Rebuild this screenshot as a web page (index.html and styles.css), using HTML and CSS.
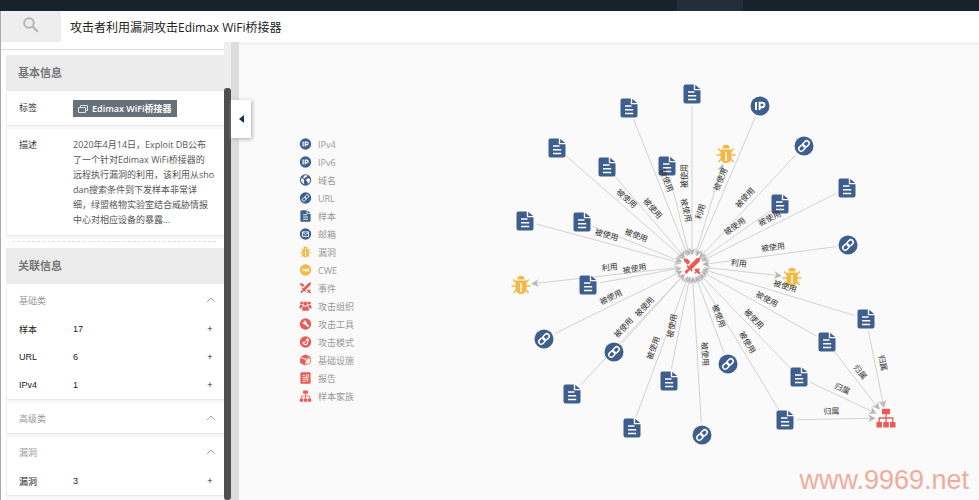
FILE: index.html
```html
<!DOCTYPE html>
<html lang="zh-CN">
<head>
    <meta charset="UTF-8">
    <meta name="viewport" content="width=device-width, initial-scale=1.0">
    <title>攻击者利用漏洞攻击Edimax WiFi桥接器</title>
    <link rel="stylesheet" href="styles.css">
</head>
<body>

<svg class="sprite" aria-hidden="true">
    <symbol id="ip" viewBox="0 0 20 20">
        <circle cx="10" cy="10" r="9.5"/>
        <path class="cut-line bold" d="M6 6v8M9.6 14V6.8h2.6a2.2 2.2 0 0 1 0 4.4H9.6"/>
    </symbol>
    <symbol id="domain" viewBox="0 0 20 20">
        <circle cx="10" cy="10" r="9.5"/>
        <path class="cut" d="M3 7l3 1 2 3-1 2 1 4-3-2-3-4zM9 2l4 0-1 3-3 1-1 2-2-1 1-3zM12 8l4-1 2 3-2 5-2 1-1-4-2-1z"/>
    </symbol>
    <symbol id="url" viewBox="0 0 20 20">
        <circle cx="10" cy="10" r="9.5"/>
        <g transform="rotate(-45 10 10)">
            <rect class="cut-line" x="3.6" y="7.6" width="7" height="4.8" rx="2.4"/>
            <rect class="cut-line" x="9.4" y="7.6" width="7" height="4.8" rx="2.4"/>
        </g>
    </symbol>
    <symbol id="sample" viewBox="0 0 20 20">
        <path d="M3.500.5h8.300v5.700h6.700v11.300a2 2 0 0 1-2 2h-13a2 2 0 0 1-2-2v-15a2 2 0 0 1 2-2zM13.200.8l5 4.300h-5z"/>
        <path class="cut-line" d="M6 8h6.500M6 11.700h8.200M6 15.400h8.200"/>
    </symbol>
    <symbol id="mail" viewBox="0 0 20 20">
        <circle cx="10" cy="10" r="9.500"/>
        <path class="cut-line" d="M5 6.500h10v7.500H5zM5 7l5 4 5-4"/>
    </symbol>
    <symbol id="bug" viewBox="0 0 20 20">
        <path d="M6.300 4.500a3.700 3.700 0 0 1 7.400 0zM4.500 5.500h11v8a5.500 5.500 0 0 1-11 0z"/>
        <path class="leg" d="M5 7.500L2.200 4.500M15 7.500l2.800-3M5 11H.5M15 11h4.500M5.500 14.500l-3 3.500M14.500 14.500l3 3.500"/>
        <path class="cut-line" d="M10 8v9"/>
    </symbol>
    <symbol id="cwe" viewBox="0 0 20 20">
        <circle cx="10" cy="10" r="9.500"/>
        <path class="cut-line" d="M7 8a2 2 0 1 0 0 4M8.500 8l1 4 1-3 1 3 1-4M16 8h-2v4h2M14 10h2"/>
    </symbol>
    <symbol id="event" viewBox="0 0 20 20">
        <path d="M19.500.5l-1 4.500-8.800 8.800 1.300 1.400-1.400 1.300-2-2-3.800 4.300-2.300-2.300L5.700 12.500l-2-2 1.400-1.400 1.300 1.300L15 1.500zM.5 1.500l4.500.8 3.200 3.200-3 3L1.500 5zM12.500 14.200l2-2 1.500 1.500 1.500-1.500 1.300 1.400-1.500 1.500 2.200 2.400-1.800 1.800-2.400-2.200-1.500 1.500-1.300-1.400 1.500-1.500z"/>
    </symbol>
    <symbol id="group" viewBox="0 0 20 20">
        <circle cx="10" cy="6" r="3.500"/><circle cx="3.800" cy="5" r="2.700"/><circle cx="16.200" cy="5" r="2.700"/>
        <path d="M4.500 18v-3.500c0-3 2-4.500 3.500-4.500l2 2 2-2c1.500 0 3.500 1.500 3.500 4.500V18zM0 14v-2.500C0 9.500 1.500 8 3 8l3 1.500C4 11 3.500 12.500 3.500 14zM20 14v-2.500C20 9.500 18.500 8 17 8l-3 1.500c2 1.500 2.500 3 2.500 4.500z"/>
    </symbol>
    <symbol id="tool" viewBox="0 0 20 20">
        <circle cx="10" cy="10" r="9.500"/>
        <path class="cut" d="M5 6l2.300 1.800 1.500-1.500L7 4.500c3-1 5.500 1.500 4.500 4l4.500 5-1.800 1.800-5-4.500C7 11.500 4.500 9 5 6z"/>
    </symbol>
    <symbol id="mode" viewBox="0 0 20 20">
        <circle cx="10" cy="10" r="9.500"/>
        <path class="cut-line bold" d="M6 9.500c-.5 5.500 7 6.500 7.500 1.500V5.500M11 7.500l2.500-2.500L15.500 7.500M8 11l2-2"/>
    </symbol>
    <symbol id="infra" viewBox="0 0 20 20">
        <path d="M10 1l8.500 3.500L10 8 1.500 4.500z"/>
        <path d="M1 6l8.300 3.500V19L1 15z"/>
        <path class="outline" d="M10.500 9.500L18.300 6.200v8.500l-7.800 3.600z"/>
    </symbol>
    <symbol id="report" viewBox="0 0 20 20">
        <rect x="1.500" y=".5" width="17" height="19" rx="2"/>
        <path class="cut-line" d="M5 5.500h4M5 9h10M5 12h10M5 15.500h5M12 3.500v5M15 4v4M13 13v3"/>
    </symbol>
    <symbol id="family" viewBox="0 0 20 20">
        <path d="M6 .8h8v5.500H6zM.5 14h5.500v5.500H.5zM7.300 14h5.500v5.500H7.300zM14 14h5.500v5.500H14z"/>
        <path class="leg" d="M10 6v8M3.200 14v-4h13.600v4"/>
    </symbol>
</svg>

<nav class="topbar"><span class="topbar-tab"></span></nav>

<header class="header">
    <button class="search" type="button" aria-label="搜索">
        <svg viewBox="0 0 16 16"><circle cx="6" cy="6" r="4.800"/><path d="M9.500 9.500l5.300 5.300"/></svg>
    </button>
    <h1 class="title">攻击者利用漏洞攻击Edimax WiFi桥接器</h1>
</header>

<div class="content">
    <aside class="sidebar">
        <div class="panel">
            <h2 class="section-title">基本信息</h2>
            <div class="card info">
                <span class="label">标签</span>
                <span class="tag">
                    <svg viewBox="0 0 10 8"><path d="M2.500 2V.5h7v5H8M.5 2.500h7v5h-7z"/></svg>
                    Edimax WiFi桥接器
                </span>
            </div>
            <div class="card info">
                <span class="label">描述</span>
                <p class="desc">2020年4月14日，Exploit DB公布<br>了一个针对Edimax WiFi桥接器的<br>远程执行漏洞的利用，该利用从sho<br>dan搜索条件到下发样本非常详<br>细，绿盟格物实验室结合威胁情报<br>中心对相应设备的暴露...</p>
            </div>
            <hr class="divider">

            <h2 class="section-title">关联信息</h2>
            <div class="card">
                <button class="fold" type="button">基础类<svg viewBox="0 0 10 6"><path d="M1 5l4-4 4 4"/></svg></button>
                <div class="row"><span>样本</span><span>17</span><button type="button">+</button></div>
                <div class="row"><span>URL</span><span>6</span><button type="button">+</button></div>
                <div class="row"><span>IPv4</span><span>1</span><button type="button">+</button></div>
            </div>
            <div class="card">
                <button class="fold" type="button">高级类<svg viewBox="0 0 10 6"><path d="M1 5l4-4 4 4"/></svg></button>
            </div>
            <div class="card">
                <button class="fold" type="button">漏洞<svg viewBox="0 0 10 6"><path d="M1 5l4-4 4 4"/></svg></button>
                <div class="row"><span>漏洞</span><span>3</span><button type="button">+</button></div>
            </div>
        </div>
        <div class="scrollbar"><div class="thumb"></div></div>
        <div class="edge">
            <button class="collapse" type="button" aria-label="收起"><svg viewBox="0 0 5 8"><path d="M5 0v8L0 4z"/></svg></button>
        </div>
    </aside>

    <main class="main">
        <ul class="legend">
            <li><svg class="blue"><use href="#ip"/></svg>IPv4</li>
            <li><svg class="blue"><use href="#ip"/></svg>IPv6</li>
            <li><svg class="blue"><use href="#domain"/></svg>域名</li>
            <li><svg class="blue"><use href="#url"/></svg>URL</li>
            <li><svg class="blue"><use href="#sample"/></svg>样本</li>
            <li><svg class="blue"><use href="#mail"/></svg>邮箱</li>
            <li><svg class="yellow"><use href="#bug"/></svg>漏洞</li>
            <li><svg class="yellow"><use href="#cwe"/></svg>CWE</li>
            <li><svg class="red"><use href="#event"/></svg>事件</li>
            <li><svg class="red"><use href="#group"/></svg>攻击组织</li>
            <li><svg class="red"><use href="#tool"/></svg>攻击工具</li>
            <li><svg class="red"><use href="#mode"/></svg>攻击模式</li>
            <li><svg class="red"><use href="#infra"/></svg>基础设施</li>
            <li><svg class="red"><use href="#report"/></svg>报告</li>
            <li><svg class="red"><use href="#family"/></svg>样本家族</li>
        </ul>
        <svg class="graph" id="graph" viewBox="0 0 600 458"></svg>
        <div class="watermark">www.9969.net</div>
    </main>
</div>

<script src="graph.js"></script>
</body>
</html>
```
FILE: styles.css
```css
* {
    box-sizing: border-box;
}

body {
    margin: 0;
    height: 100vh;
    display: flex;
    flex-direction: column;
    overflow: hidden;
    background: #fff;
    color: #333;
    font-family: "Open Sans", "Noto Sans CJK SC", sans-serif;
    font-size: 9px;
}

button {
    border: 0;
    padding: 0;
    background: none;
    font: inherit;
    color: inherit;
    cursor: pointer;
}

.sprite {
    position: absolute;
    width: 0;
    height: 0;
}

/* icons */
.blue { fill: #3e5f8d; stroke: #3e5f8d; }
.yellow { fill: #f2b944; stroke: #f2b944; }
.red { fill: #ea5b55; stroke: #ea5b55; }

symbol * {
    stroke-width: 0;
}

symbol .cut {
    fill: #fff;
}

symbol .cut-line {
    fill: none;
    stroke: #fff;
    stroke-width: 1.5;
}

symbol .bold {
    stroke-width: 2;
}

symbol .leg, symbol .outline {
    fill: none;
    stroke-width: 1.3;
}

/* top */
.topbar {
    flex: none;
    height: 11px;
    background: #18222d;
    display: flex;
    justify-content: flex-end;
    padding-right: 236px;
}

.topbar-tab {
    width: 66px;
    background: #242e39;
}

.header {
    flex: none;
    height: 31px;
    display: flex;
    align-items: center;
    border-left: 1px solid #aaa;
}

.search {
    width: 60px;
    height: 31px;
    background: #eee;
}

.search svg {
    width: 16px;
    height: 16px;
    fill: none;
    stroke: #b5b5b5;
    stroke-width: 2;
}

.title {
    margin: 0 0 0 9px;
    font-size: 12px;
    font-weight: 400;
    color: #222;
}

.content {
    flex: 1;
    min-height: 0;
    display: flex;
}

/* sidebar */
.sidebar {
    position: relative;
    z-index: 1;
    flex: none;
    width: 239px;
    display: flex;
    border-left: 1px solid #aaa;
}

.panel {
    flex: 1;
    overflow: hidden;
    margin-top: 7px;
    padding: 5px 0 0 5px;
    border-top: 1px solid #ddd;
}

.section-title {
    margin: 0 0 1px;
    padding-left: 12px;
    line-height: 36px;
    background: #ececec;
    color: #777;
    font-size: 11px;
    font-weight: 600;
}

.card {
    border-left: 1px solid #eee;
    border-bottom: 1px solid #e8e8e8;
    margin-bottom: 3px;
    box-shadow: 0 3px #f6f6f6;
}

.info {
    display: flex;
    align-items: flex-start;
    padding: 8px 0 8px 12px;
    line-height: 15px;
}

.label {
    flex: none;
    width: 54px;
}

.tag {
    display: flex;
    align-items: center;
    gap: 4px;
    height: 17px;
    padding: 0 5px;
    background: #677179;
    color: #fff;
    font-weight: 600;
}

.tag svg {
    width: 10px;
    height: 8px;
    fill: none;
    stroke: #dde1e4;
}

.desc {
    margin: 0;
    color: #555;
}

.divider {
    margin: 5px 8px 6px 6px;
    border: 0;
    border-top: 1px dashed #ddd;
}

.fold {
    display: flex;
    align-items: center;
    justify-content: space-between;
    width: 100%;
    height: 30px;
    padding: 0 8px 0 12px;
    color: #999;
}

.fold svg {
    width: 10px;
    height: 6px;
    fill: none;
    stroke: #aaa;
}

.row {
    display: grid;
    grid-template-columns: 54px 1fr 10px;
    align-items: center;
    height: 28px;
    padding: 0 9px 0 12px;
    font-family: "Liberation Sans", "Noto Sans CJK SC", sans-serif;
    color: #222;
}

.scrollbar {
    width: 7px;
    padding-top: 46px;
    background: #eee;
}

.thumb {
    height: 100%;
    border-radius: 3px;
    background: #4f4f4f;
}

.edge {
    position: relative;
    width: 8px;
    background: #dcdcdc;
}

.collapse {
    position: absolute;
    top: 58px;
    left: 0;
    width: 20px;
    height: 38px;
    background: #fff;
    box-shadow: 1px 1px 4px #aaa;
}

.collapse svg {
    width: 5px;
    height: 8px;
    fill: #18324a;
}

/* graph area */
.main {
    position: relative;
    flex: 1;
    min-width: 0;
    display: flex;
    background: #fafafa;
    box-shadow: inset 0 3px #f4f4f4;
}

.legend {
    flex: none;
    width: 140px;
    margin: 0;
    padding: 93px 0 0 60px;
    list-style: none;
    color: #999;
}

.legend li {
    display: flex;
    align-items: center;
    gap: 6px;
    height: 18px;
}

.legend svg {
    width: 13px;
    height: 12px;
}

.graph {
    flex: 1;
    min-width: 0;
    height: 100%;
}

.edge-line {
    stroke: #d2d2d2;
}

.arrow {
    fill: #b4b4b4;
    stroke: #eee;
    stroke-width: .5;
}

.halo {
    fill: #fff;
}

.edge-label {
    font-size: 8px;
    fill: #333;
    text-anchor: middle;
}

.watermark {
    position: absolute;
    right: 10px;
    bottom: 4px;
    font: 27px/31px "Liberation Sans", sans-serif;
    color: #efac9e;
}
```
FILE: graph.js
```javascript
var SVG = 'http://www.w3.org/2000/svg';
var graph = document.getElementById('graph');

var cores = { ip: 'blue', url: 'blue', sample: 'blue', bug: 'yellow', event: 'red', family: 'red' };

var center = { type: 'event', x: 313, y: 224 };
var family = { type: 'family', x: 507, y: 376 };

// type, x, y, belongs to the sample family
var nodes = [
    ['sample', 250, 66], ['sample', 178, 106], ['sample', 228, 125], ['sample', 288, 124],
    ['sample', 313, 52], ['sample', 146, 179], ['sample', 203, 180], ['sample', 209, 243],
    ['sample', 193, 352], ['sample', 253, 386], ['sample', 290, 339], ['sample', 401, 162],
    ['sample', 468, 146], ['sample', 406, 378, true], ['sample', 420, 335, true],
    ['sample', 448, 300, true], ['sample', 487, 277, true],
    ['url', 425, 104], ['url', 469, 203], ['url', 165, 297], ['url', 235, 310],
    ['url', 349, 322], ['url', 323, 393],
    ['ip', 381, 64],
    ['bug', 347, 112], ['bug', 142, 243], ['bug', 413, 235]
];

function add(name, attrs) {
    var el = document.createElementNS(SVG, name);
    for (var key in attrs) {
        el.setAttribute(key, attrs[key]);
    }
    graph.appendChild(el);
    return el;
}

function drawEdge(from, to) {
    var angle = Math.atan2(to.y - from.y, to.x - from.x);
    var cos = Math.cos(angle), sin = Math.sin(angle);
    var deg = angle * 180 / Math.PI;
    add('line', {
        'class': 'edge-line',
        x1: from.x + cos * 12, y1: from.y + sin * 12,
        x2: to.x - cos * 14, y2: to.y - sin * 14
    });
    add('path', {
        'class': 'arrow',
        d: 'M-10 0l-8 -4l2 4l-2 4z',
        transform: 'translate(' + to.x + ' ' + to.y + ') rotate(' + deg + ')'
    });
}

// label sits on the upper side of the line, never upside down,
// a little nearer to the start because of the arrow at the end
function drawLabel(from, to, text) {
    var angle = Math.atan2(to.y - from.y, to.x - from.x);
    var x = (from.x + to.x) / 2 - Math.cos(angle) * 4;
    var y = (from.y + to.y) / 2 - Math.sin(angle) * 4;
    var deg = angle * 180 / Math.PI;
    if (deg >= 90) deg -= 180;
    if (deg < -90) deg += 180;
    add('text', {
        'class': 'edge-label',
        y: -5,
        transform: 'translate(' + x + ' ' + y + ') rotate(' + deg + ')'
    }).textContent = text;
}

function drawNode(node) {
    var size = node.type == 'event' ? 18 : 20;
    add('use', {
        'class': cores[node.type],
        href: '#' + node.type,
        x: node.x - size / 2, y: node.y - size / 2, width: size, height: size
    });
}

var edges = [];
nodes = nodes.map(function (n) {
    var node = { type: n[0], x: n[1], y: n[2] };
    if (node.type == 'bug') {
        edges.push([center, node, '利用']);
    } else {
        edges.push([node, center, '被使用']);
    }
    if (n[3]) {
        edges.push([node, family, '归属']);
    }
    return node;
});

edges.forEach(function (e) { drawEdge(e[0], e[1]); });
add('circle', { 'class': 'halo', cx: center.x, cy: center.y, r: 11 });
nodes.concat(center, family).forEach(drawNode);
edges.forEach(function (e) { drawLabel(e[0], e[1], e[2]); });
```
